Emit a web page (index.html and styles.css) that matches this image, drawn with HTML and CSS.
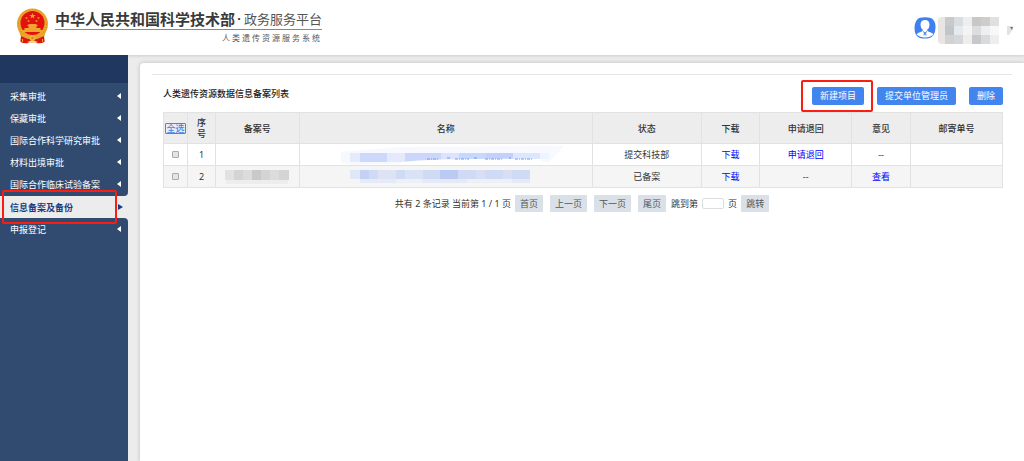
FILE: index.html
```html
<!DOCTYPE html>
<html lang="zh-CN">
<head>
    <meta charset="UTF-8">
    <meta name="viewport" content="width=device-width, initial-scale=1.0">
    <title>人类遗传资源服务系统</title>
    <link rel="stylesheet" href="styles.css">
</head>
<body>
<header class="header">
    <div class="brand">
        <svg class="emblem" viewBox="0 0 32 36" aria-hidden="true">
            <path d="M5 22 4 33q3 3 7 1l5-2 5 2q4 2 7-1l-1-11z" fill="#d8150f"/>
            <ellipse cx="16" cy="16" rx="15.5" ry="15.5" fill="#e9a62b"/>
            <ellipse cx="16" cy="16" rx="14" ry="14.5" fill="none" stroke="#d68b20" stroke-width="1" stroke-dasharray="1 2"/>
            <circle cx="16" cy="15" r="12" fill="#e4120e"/>
            <path d="m16 5 .8 2h2.200l-1.700 1.400.6 2.100-1.900-1.200-1.900 1.200.6-2.100L13 7h2.200z" fill="#f2a02f"/>
            <g fill="#f0902b"><circle cx="10" cy="10" r="1"/><circle cx="12" cy="13" r="1"/><circle cx="20" cy="13" r="1"/><circle cx="22" cy="10" r="1"/></g>
            <path d="M11 18v-1l2-1h6l2 1v1h-1v2h4v2h2v2H6v-2h2v-2h4v-2z" fill="#f2a52e"/>
            <path d="M3 24q6 4 13 3 7 1 13-3l-1 4q-6 3-12 3-6 0-12-3z" fill="#e7a52a"/>
            <path d="M5 29q5 3 8 2l-1 4q-4 1-8-1zM27 29q-5 3-8 2l1 4q4 1 8-1z" fill="#dc1710"/>
            <circle cx="16" cy="30" r="3" fill="#f3b533"/>
            <circle cx="16" cy="30" r="1.200" fill="#d98420"/>
            <path d="M11 34h10M6 31v3M26 31v3" stroke="#efaa2d"/>
        </svg>
        <div class="brand-text">
            <div class="brand-title"><strong>中华人民共和国科学技术部</strong><b class="dot">·</b><span>政务服务平台</span></div>
            <div class="brand-sub">人类遗传资源服务系统</div>
        </div>
    </div>
    <div class="user">
        <svg class="avatar" viewBox="0 0 22 22" aria-hidden="true">
            <path d="M5 1q6-1.500 12 0 5 3 4.500 10-.5 8-6 10-5 1-9.500 0Q.5 19 .5 11 .5 4 5 1z" fill="#3f80ee"/>
            <path d="M11 3q4.500 0 4.500 5 0 3-2.500 5 0 1.500 2.500 2 3 .5 4 2.500-3.500 3-8.500 3t-8.500-3q1-2 4-2.500 2.500-.5 2.500-2-2.500-2-2.500-5 0-5 4.500-5z" fill="#fff"/>
            <path d="m9 14.500 2 1.500 2-1.500M10.500 16l-.5 2.500M11.500 16l.5 2.500" fill="none" stroke="#3f80ee"/>
        </svg>
        <svg class="user-name" viewBox="0 0 61 27" aria-hidden="true">
            <rect width="61" height="27" rx="4" fill="#e8e5e3"/>
            <path d="M7 0h9v9H7z" fill="#c8caca"/><path d="M16 0h9v9h-9z" fill="#d8dde2"/><path d="M25 0h9v9h-9z" fill="#eee"/><path d="M34 0h9v9h-9z" fill="#c8c8c8"/><path d="M43 0h9v9h-9z" fill="#cfcdcc"/><path d="M52 0h9v9h-9z" fill="#dfe0e1"/>
            <path d="M7 9h9v9H7z" fill="#c0c5c9"/><path d="M16 9h9v9h-9z" fill="#e5eaef"/><path d="M25 9h9v9h-9z" fill="#f2f4f5"/><path d="M34 9h9v9h-9z" fill="#ddd"/><path d="M43 9h9v9h-9z" fill="#edf0f2"/><path d="M52 9h9v9h-9z" fill="#f8f8f8"/>
            <path d="M7 18h9v9H7z" fill="#d2d2d2"/><path d="M16 18h9v9h-9z" fill="#d5d7da"/><path d="M25 18h9v9h-9z" fill="#f0eeec"/><path d="M34 18h9v9h-9z" fill="#c7c8c9"/><path d="M43 18h9v9h-9z" fill="#dadada"/><path d="M52 18h9v9h-9z" fill="#eee"/>
        </svg>
        <svg class="caret" viewBox="0 0 7 11" aria-hidden="true"><path d="M0 1h6v3L2 10H0z" fill="#e2e2e2"/><path d="M3 2h3L5 5z" fill="#777"/></svg>
    </div>
</header>

<div class="layout">
    <nav class="sidebar">
        <div class="sidebar-top"></div>
        <ul class="menu menu-before">
            <li><a href="#">采集审批</a></li>
            <li><a href="#">保藏审批</a></li>
            <li><a href="#">国际合作科学研究审批</a></li>
            <li><a href="#">材料出境审批</a></li>
            <li><a href="#">国际合作临床试验备案</a></li>
        </ul>
        <div class="active-item">
            <a href="#" aria-current="page">信息备案及备份</a>
            <span class="mark mark-menu"></span>
        </div>
        <ul class="menu menu-after">
            <li><a href="#">申报登记</a></li>
        </ul>
    </nav>

    <main class="panel">
        <div class="toolbar">
            <h1>人类遗传资源数据信息备案列表</h1>
            <div class="actions">
                <div class="new-project">
                    <button class="btn">新建项目</button>
                    <span class="mark mark-new"></span>
                </div>
                <button class="btn">提交单位管理员</button>
                <button class="btn">删除</button>
            </div>
        </div>

        <table class="list">
            <colgroup>
                <col class="c-check"><col class="c-no"><col class="c-record"><col class="c-name"><col class="c-status"><col class="c-download"><col class="c-return"><col class="c-opinion"><col class="c-post">
            </colgroup>
            <thead>
                <tr>
                    <th><a class="select-all" href="#">全选</a></th>
                    <th>序<br>号</th>
                    <th>备案号</th>
                    <th>名称</th>
                    <th>状态</th>
                    <th>下载</th>
                    <th>申请退回</th>
                    <th>意见</th>
                    <th>邮寄单号</th>
                </tr>
            </thead>
            <tbody>
                <tr>
                    <td><input type="checkbox" aria-label="选择 1"></td>
                    <td>1</td>
                    <td></td>
                    <td>
                        <svg class="name-mask" viewBox="0 1 210 20" aria-hidden="true">
                            <path d="M0 8 60 3l163-1-15 16H120L10 21 0 18z" fill="#f7f9fe"/>
                            <path d="M9 9h10v9H9z" fill="#e3ebfd"/><path d="M19 9h27v9H19z" fill="#ccd9fb"/><path d="M46 9h18v9H46z" fill="#e4e9fb"/><path d="M64 9h36v9H64z" fill="#cbd7fa"/><path d="M100 9h18v7h-18z" fill="#dbe4fc"/><path d="M118 9h27v7h-27z" fill="#c8d8fc"/><path d="M145 9h27v7h-27z" fill="#c2d1fb"/><path d="M172 9h27v6h-27z" fill="#dce7fe"/><path d="M199 9h9v6h-9z" fill="#edf3ff"/>
                            <path d="M60 18q38-4 140-3v5H60z" fill="#fff"/>
                            <path d="M86 15h12M106 14h3M114 15h14M133 14h3M144 15h17M168 14h2M174 15h17" stroke="#6e9af2" stroke-dasharray="3 1 1 1"/>
                        </svg>
                    </td>
                    <td>提交科技部</td>
                    <td><a href="#">下载</a></td>
                    <td><a href="#">申请退回</a></td>
                    <td>--</td>
                    <td></td>
                </tr>
                <tr>
                    <td><input type="checkbox" aria-label="选择 2"></td>
                    <td>2</td>
                    <td>
                        <svg class="record-mask" viewBox="0 0 64 14" aria-hidden="true">
                            <path d="M0 0h64v10H0z" fill="#d5d4d4"/><path d="M0 0h9v10H0z" fill="#e2e2e2"/><path d="M18 0h9v10h-9zM45 0h9v10h-9z" fill="#dddcdd"/><path d="M27 0h9v10h-9z" fill="#cac9c9"/><path d="M1 10h62v4H1z" fill="#eeedec"/>
                        </svg>
                    </td>
                    <td>
                        <svg class="name-mask" viewBox="0 2 210 20" aria-hidden="true">
                            <path d="M9 5h180v9H9z" fill="#cfdaf5"/><path d="M9 5h10v9H9z" fill="#e0e7f6"/><path d="M19 5h9v9h-9z" fill="#c4d1f4"/><path d="M37 5h18v9H37z" fill="#dde3f3"/><path d="M64 5h18v9H64z" fill="#dae3f5"/><path d="M99 5h18v9H99z" fill="#bacaf3"/><path d="M135 5h9v9h-9zM162 5h9v9h-9z" fill="#d8dff4"/>
                            <path d="M19 14h36v4H19zM81 14h45v4H81zM171 14h18v4h-18z" fill="#e5eaf6"/><path d="M55 14h26v4H55zM126 14h45v4h-45z" fill="#edf0f6"/>
                        </svg>
                    </td>
                    <td>已备案</td>
                    <td><a href="#">下载</a></td>
                    <td>--</td>
                    <td><a href="#">查看</a></td>
                    <td></td>
                </tr>
            </tbody>
        </table>

        <div class="pager">
            <span>共有 2 条记录 当前第 1 / 1 页</span>
            <div class="pager-buttons">
                <button>首页</button>
                <button>上一页</button>
                <button>下一页</button>
                <button>尾页</button>
            </div>
            <label for="page">跳到第</label>
            <input type="text" id="page">
            <span>页</span>
            <button>跳转</button>
        </div>
    </main>
</div>
</body>
</html>
```

FILE: styles.css
```css
* {
    box-sizing: border-box;
}
body {
    margin: 0;
    min-height: 100vh;
    display: flex;
    flex-direction: column;
    background: #ececec;
    color: #333;
    font-family: "Noto Sans", "Noto Sans CJK SC", sans-serif;
    font-size: 9px;
    overflow-x: hidden;
}
button, input {
    font-family: inherit;
    font-size: inherit;
}

/* header */
.header {
    height: 55px;
    padding: 0 10px 0 16px;
    display: flex;
    align-items: center;
    justify-content: space-between;
    background: #fff;
    box-shadow: 0 1px 3px #ccc;
}
.brand {
    display: flex;
    align-items: center;
    gap: 6px;
    padding-bottom: 3px;
}
.emblem {
    width: 33px;
    height: 36px;
}
.brand-text {
    font-family: "Noto Sans CJK SC", sans-serif;
    color: #3a3a3a;
}
.brand-title {
    display: flex;
    align-items: center;
    height: 22px;
    border-bottom: 1px solid #888;
    font-size: 13px;
    line-height: 20px;
}
.brand-title strong {
    font-size: 15px;
    font-weight: bold;
}
.dot {
    width: 9px;
    font-family: "Liberation Sans", sans-serif;
    text-align: center;
}
.brand-title span {
    color: #555;
}
.brand-sub {
    padding-top: 2px;
    font-size: 8px;
    line-height: 12px;
    letter-spacing: 2px;
    text-align: right;
    color: #555;
}
.user {
    display: flex;
    align-items: center;
    gap: 2px;
    padding-top: 5px;
}
.avatar {
    width: 22px;
    height: 22px;
    margin-bottom: 4px;
}
.user-name {
    width: 61px;
    height: 27px;
}
.caret {
    width: 7px;
    height: 11px;
    margin-left: 6px;
}

/* sidebar */
.layout {
    flex: 1;
    display: flex;
}
.sidebar {
    flex: none;
    width: 128px;
    display: flex;
    flex-direction: column;
}
.sidebar-top {
    height: 28px;
    background: #20385f;
}
.menu {
    margin: 0;
    padding: 0;
    list-style: none;
    background: #314a70;
}
.menu-before {
    padding: 2px 0 1px;
    border-bottom-right-radius: 4px;
}
.menu-after {
    flex: 1;
    border-top-right-radius: 4px;
}
.menu a, .active-item a {
    display: flex;
    align-items: center;
    justify-content: space-between;
    height: 22px;
    padding: 0 7px 0 10px;
    color: #fff;
    text-decoration: none;
}
.menu a::after {
    content: "";
    border: 3px solid transparent;
    border-left-width: 0;
    border-right: 4px solid #fff;
}
.active-item {
    position: relative;
}
.active-item a {
    padding-right: 5px;
    color: #173c87;
    font-weight: bold;
}
.active-item a::after {
    content: "";
    border: 3px solid transparent;
    border-right-width: 0;
    border-left: 5px solid #173c87;
}
.mark {
    position: absolute;
    border: 2px solid #fb1d12;
    border-radius: 2px;
    pointer-events: none;
}
.mark-menu {
    inset: -6px 11px -6px 2px;
}
.mark-new {
    inset: -7px -9px -7px -11px;
}

/* content */
.panel {
    flex: 1;
    min-width: 0;
    margin: 8px 0 0 12px;
    padding: 11px 12px 0;
    background: #fff;
    border-top-left-radius: 4px;
    box-shadow: 0 0 4px #bbb;
}
.toolbar {
    display: flex;
    justify-content: space-between;
    height: 38px;
    padding: 12px 9px 0 11px;
    border-top: 1px solid #e6e6e6;
}
.toolbar h1 {
    margin: 0;
    color: #222;
    font-size: 9px;
    line-height: 14px;
    font-weight: 500;
}
.actions {
    display: flex;
    align-items: flex-start;
    gap: 13px;
}
.new-project {
    position: relative;
    display: flex;
}
.btn {
    height: 18px;
    padding: 0 8px;
    border: 0;
    border-radius: 2px;
    background: #4285ee;
    color: #fff;
    line-height: 18px;
}
.list {
    width: calc(100% - 20px);
    margin-left: 11px;
    border-collapse: collapse;
    table-layout: fixed;
    text-align: center;
}
.list th, .list td {
    height: 22px;
    padding: 0;
    border: 1px solid #e2e2e2;
    line-height: 11px;
}
.list th {
    height: 31px;
    background: #ededed;
    font-weight: 500;
}
.list tbody tr:nth-child(even) {
    background: #f5f5f5;
}
.list a {
    color: #00f;
    text-decoration: none;
}
.list .select-all {
    display: inline-block;
    border: 1px solid #4285ee;
    border-radius: 1px;
    color: #4285ee;
    line-height: 9px;
    text-decoration: underline;
}
.c-check { width: 24px; }
.c-no { width: 28px; }
.c-record { width: 10%; }
.c-name { width: 35%; }
.c-status { width: 13%; }
.c-download { width: 7%; }
.c-return { width: 11%; }
.c-opinion { width: 7%; }
.c-post { width: 11%; }
.list svg {
    display: block;
    margin: 0 auto;
    overflow: visible;
}
.name-mask {
    width: 210px;
    height: 20px;
}
.record-mask {
    width: 64px;
    height: 14px;
}
.list input {
    appearance: none;
    display: block;
    width: 7px;
    height: 7px;
    margin: 0 auto;
    border: 1px solid #aaa;
    border-radius: 1px;
    background: #e4e4e4;
}
.list input:checked {
    background: #4285ee;
}

/* pager */
.pager {
    display: flex;
    align-items: center;
    justify-content: center;
    gap: 4px;
    margin-top: 7px;
}
.pager-buttons {
    display: flex;
    gap: 7px;
    margin-right: 1px;
}
.pager button {
    height: 17px;
    padding: 0 5px;
    border: 0;
    border-radius: 1px;
    background: #d9e0e8;
    color: #555;
    line-height: 17px;
}
.pager input {
    width: 22px;
    height: 11px;
    padding: 0 2px;
    border: 1px solid #ddd;
    border-radius: 2px;
}
```
